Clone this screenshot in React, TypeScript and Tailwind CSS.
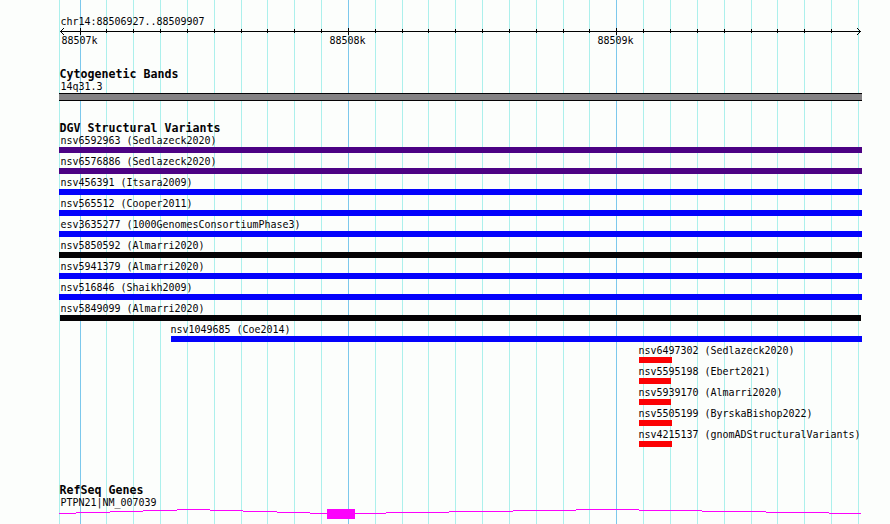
import React from "react";

const MINOR = [
  59, 106, 133, 160, 187, 214, 241, 267, 294, 321, 375, 402, 428, 455, 482, 509,
  536, 563, 589, 643, 670, 697, 724, 751, 777, 804, 831, 858,
];
const MAJOR = [80, 348, 616];

type Variant = { name: string; start: number; end: number; color: string };

const VARIANTS: Variant[] = [
  { name: "nsv6592963 (Sedlazeck2020)", start: 59, end: 862, color: "bg-[#4c0284]" },
  { name: "nsv6576886 (Sedlazeck2020)", start: 59, end: 862, color: "bg-[#4c0284]" },
  { name: "nsv456391 (Itsara2009)", start: 59, end: 862, color: "bg-[#0402fc]" },
  { name: "nsv565512 (Cooper2011)", start: 59, end: 862, color: "bg-[#0402fc]" },
  { name: "esv3635277 (1000GenomesConsortiumPhase3)", start: 59, end: 862, color: "bg-[#0402fc]" },
  { name: "nsv5850592 (Almarri2020)", start: 59, end: 862, color: "bg-[#040204]" },
  { name: "nsv5941379 (Almarri2020)", start: 59, end: 862, color: "bg-[#0402fc]" },
  { name: "nsv516846 (Shaikh2009)", start: 59, end: 862, color: "bg-[#0402fc]" },
  { name: "nsv5849099 (Almarri2020)", start: 60, end: 861, color: "bg-[#040204]" },
  { name: "nsv1049685 (Coe2014)", start: 171, end: 862, color: "bg-[#0402fc]" },
  { name: "nsv6497302 (Sedlazeck2020)", start: 639, end: 672, color: "bg-[#fc0204]" },
  { name: "nsv5595198 (Ebert2021)", start: 639, end: 671, color: "bg-[#fc0204]" },
  { name: "nsv5939170 (Almarri2020)", start: 639, end: 671, color: "bg-[#fc0204]" },
  { name: "nsv5505199 (ByrskaBishop2022)", start: 639, end: 672, color: "bg-[#fc0204]" },
  { name: "nsv4215137 (gnomADStructuralVariants)", start: 639, end: 672, color: "bg-[#fc0204]" },
];

// Intron steps: [start, end, y]
const INTRONS = [
  [59, 76, 4], [76, 110, 3], [110, 143, 2], [143, 177, 1], [177, 210, 0],
  [210, 243, 1], [243, 277, 2], [277, 310, 3], [310, 327, 4], [355, 386, 4],
  [386, 449, 3], [449, 513, 2], [513, 576, 1], [576, 639, 0], [639, 702, 1],
  [702, 766, 2], [766, 829, 3], [829, 861, 4],
];

function Label({ children }: { children: React.ReactNode }) {
  return (
    <div className="h-3 origin-[0_9px] scale-y-110 whitespace-pre pl-[0.6px] text-[10px] leading-3 tracking-[-0.02px]">
      {children}
    </div>
  );
}

function Heading({ children }: { children: React.ReactNode }) {
  return (
    <h2 className="h-[13px] whitespace-pre pl-[59.4px] text-[11.6px] font-bold leading-3 tracking-[0.02px]">
      {children}
    </h2>
  );
}

function GridLines() {
  return (
    <svg className="absolute inset-0" width="890" height="524" shapeRendering="crispEdges">
      {MINOR.map((x) => (
        <rect key={x} x={x} y="0" width="1" height="524" fill="#acf0ec" />
      ))}
      {MAJOR.map((x) => (
        <rect key={x} x={x} y="0" width="1" height="524" fill="#7cc8ec" />
      ))}
    </svg>
  );
}

function Axis() {
  return (
    <svg className="block" width="890" height="7" shapeRendering="crispEdges" overflow="visible">
      <rect x="60" y="3" width="801" height="1" />
      {MINOR.slice(1, -1).map((x) => (
        <rect key={x} x={x} y="1" width="1" height="4" />
      ))}
      {MAJOR.map((x) => (
        <rect key={x} x={x} y="0" width="1" height="7" />
      ))}
      {[1, 2, 3].map((d) => (
        <g key={d}>
          <rect x={60 + d} y={3 - d} width="1" height="1" />
          <rect x={60 + d} y={3 + d} width="1" height="1" />
          <rect x={860 - d} y={3 - d} width="1" height="1" />
          <rect x={860 - d} y={3 + d} width="1" height="1" />
        </g>
      ))}
    </svg>
  );
}

export default function App() {
  return (
    <main className="relative h-[524px] w-[890px] overflow-hidden bg-[#fcfefc] font-['DejaVu_Sans_Mono',monospace] text-[#040204]">
      <GridLines />
      <div className="relative flex flex-col pt-4">
        <section>
          <div className="pl-[60px]">
            <Label>chr14:88506927..88509907</Label>
          </div>
          <Axis />
          <div className="flex pl-[61px]">
            <div className="w-[268px]"><Label>88507k</Label></div>
            <div className="w-[268px]"><Label>88508k</Label></div>
            <Label>88509k</Label>
          </div>
        </section>

        <section className="mt-[21px]">
          <Heading>Cytogenetic Bands</Heading>
          <div className="pl-[60px]">
            <Label>14q31.3</Label>
          </div>
          <div className="ml-[59px] h-2 w-[803px] border-y border-[#040204] bg-[#848284]" />
        </section>

        <section className="mt-[21px]">
          <Heading>DGV Structural Variants</Heading>
          {VARIANTS.map((v) => (
            <div key={v.name} className="h-[21px]">
              <div style={{ paddingLeft: v.start < 100 ? 60 : v.start - 1 }}>
                <Label>{v.name}</Label>
              </div>
              <div
                className={`h-1.5 ${v.color}`}
                style={{ marginLeft: v.start, width: v.end - v.start }}
              />
            </div>
          ))}
        </section>

        <section className="mt-[34px]">
          <Heading>RefSeq Genes</Heading>
          <div className="pl-[60px]">
            <Label>PTPN21|NM_007039</Label>
          </div>
          <svg className="block" width="890" height="10" fill="#fc02fc" shapeRendering="crispEdges">
            {INTRONS.map(([start, end, y]) => (
              <rect key={start} x={start} y={y} width={end - start} height="1" />
            ))}
            <rect x="327" y="0" width="28" height="10" />
          </svg>
        </section>
      </div>
    </main>
  );
}
